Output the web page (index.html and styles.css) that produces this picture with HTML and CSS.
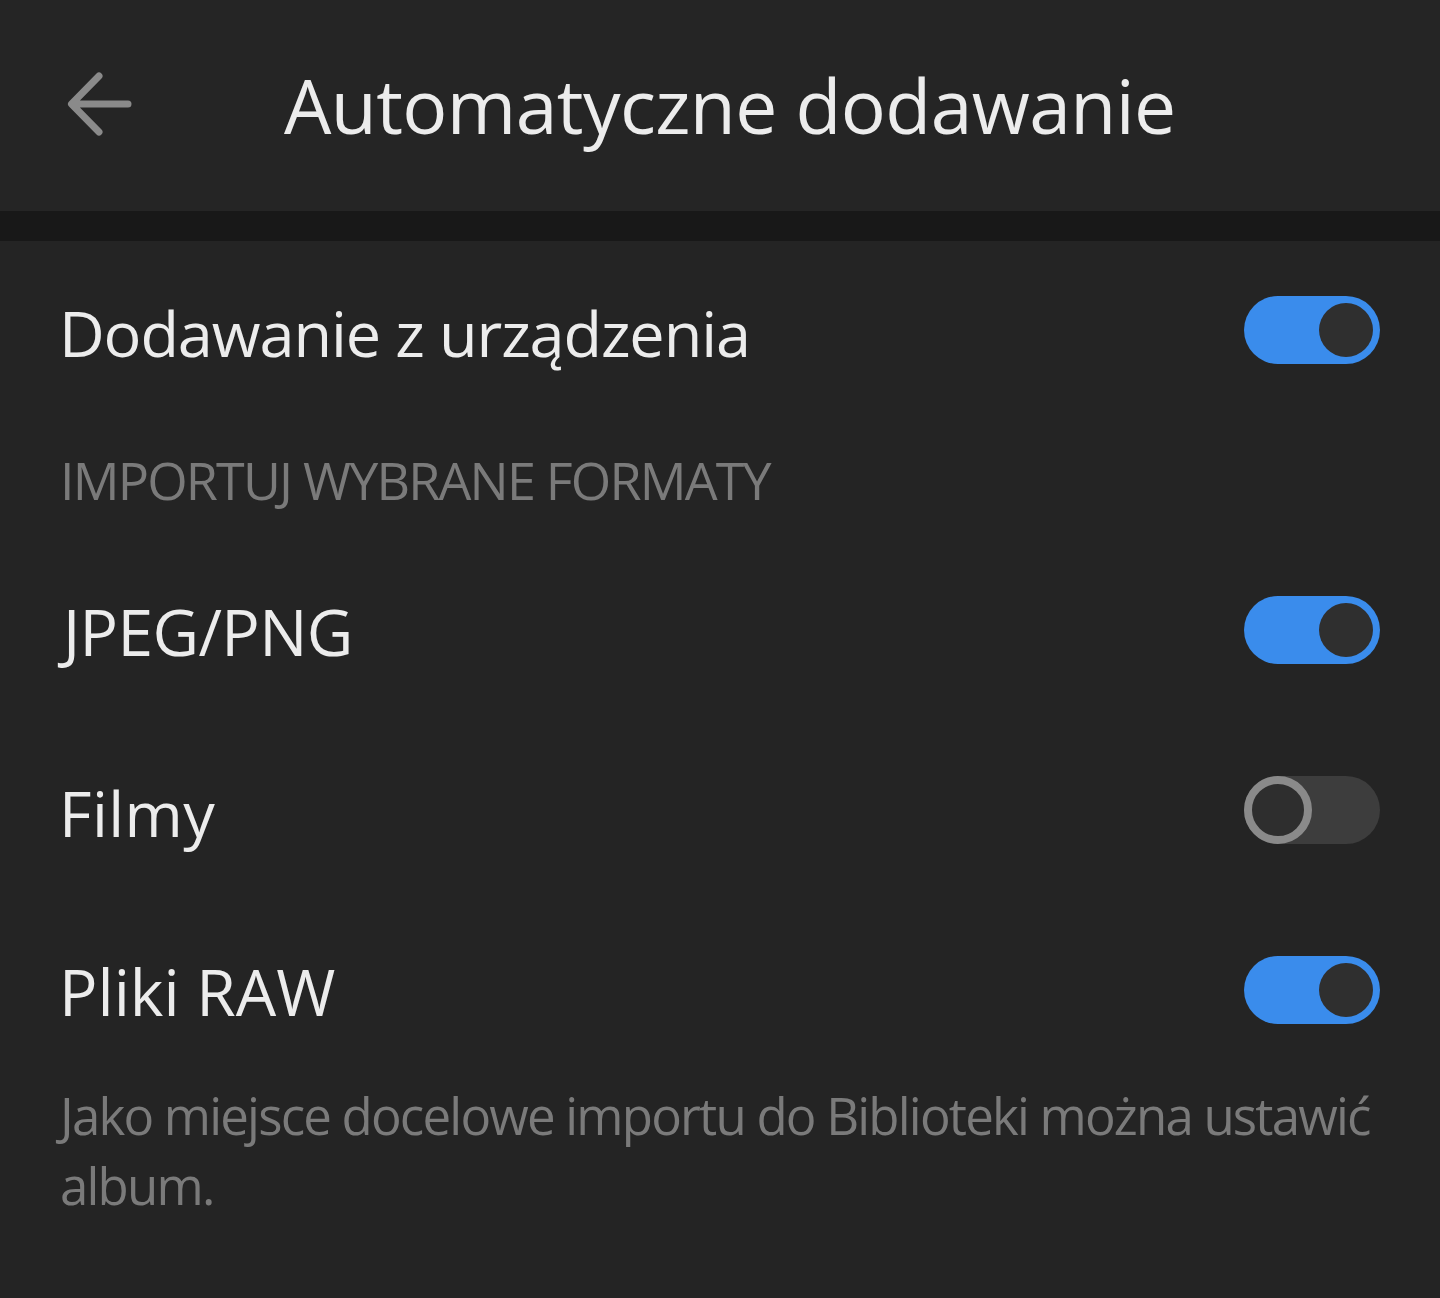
FILE: index.html
```html
<!DOCTYPE html>
<html lang="pl">
<head>
<meta charset="utf-8">
<title>Automatyczne dodawanie</title>
<link rel="stylesheet" href="styles.css">
</head>
<body>
<header class="appbar">
  <button class="back" aria-label="Wstecz">
    <svg width="72" height="72" viewBox="0 0 72 72">
      <path d="M64 36H8M35 8L7.5 36L35 64" fill="none" stroke="#8a8a8a" stroke-width="7" stroke-linecap="round" stroke-linejoin="round"/>
    </svg>
  </button>
  <h1 class="title">Automatyczne dodawanie</h1>
</header>
<div class="band"></div>
<main class="content">
  <div class="row row-first">
    <span class="label">Dodawanie z urządzenia</span>
    <span class="toggle on"><span class="knob"></span></span>
  </div>
  <div class="section">IMPORTUJ WYBRANE FORMATY</div>
  <div class="row">
    <span class="label label-caps label-j">JPEG/PNG</span>
    <span class="toggle on"><span class="knob"></span></span>
  </div>
  <div class="row">
    <span class="label label-short">Filmy</span>
    <span class="toggle off"><span class="knob"></span></span>
  </div>
  <div class="row">
    <span class="label label-caps">Pliki RAW</span>
    <span class="toggle on"><span class="knob"></span></span>
  </div>
  <p class="note">Jako miejsce docelowe importu do Biblioteki można ustawić album.</p>
</main>
</body>
</html>
```
FILE: styles.css
```css
html, body {
  margin: 0;
  padding: 0;
  background: #242424;
}
body {
  font-family: "Open Sans", "Noto Sans", sans-serif;
  color: #ececec;
  width: 1440px;
  height: 1298px;
  overflow: hidden;
}
.appbar {
  height: 211px;
  display: flex;
  align-items: center;
  background: #252525;
}
.back {
  background: none;
  border: 0;
  padding: 0;
  margin: 0 0 0 64px;
  width: 72px;
  height: 72px;
  display: flex;
  align-items: center;
  justify-content: center;
  margin-top: -4px;
}
.title {
  margin: 0 0 0 148px;
  font-weight: 400;
  font-size: 75px;
  letter-spacing: -0.6px;
  color: #ececec;
  line-height: 1;
}
.band {
  height: 30px;
  background: #181818;
}
.content {
  padding: 0 60px 0 59px;
}
.row {
  height: 180px;
  display: flex;
  align-items: center;
  justify-content: space-between;
}
.row-first {
  height: 178px;
}
.label {
  font-size: 63px;
  letter-spacing: -1.1px;
  line-height: 1;
  margin-top: 4px;
}
.label-caps {
  font-size: 64px;
  letter-spacing: 0;
}
.label-j {
  margin-left: 4px;
  letter-spacing: -0.6px;
}
.label-short {
  letter-spacing: 0.4px;
}
.section {
  height: 121px;
  display: flex;
  align-items: center;
  font-size: 52px;
  letter-spacing: -1.8px;
  color: #7a7a7a;
  padding-left: 1px;
}
.toggle {
  position: relative;
  width: 136px;
  height: 68px;
  border-radius: 34px;
  flex: none;
  box-sizing: border-box;
}
.toggle.on {
  background: #3a8cec;
}
.toggle.on .knob {
  position: absolute;
  right: 7px;
  top: 7px;
  width: 54px;
  height: 54px;
  border-radius: 50%;
  background: #2f2f2f;
}
.toggle.off {
  background: #3d3d3d;
}
.toggle.off .knob {
  position: absolute;
  left: 0;
  top: 0;
  width: 68px;
  height: 68px;
  box-sizing: border-box;
  border-radius: 50%;
  border: 8px solid #8a8a8a;
  background: #2e2e2e;
}
.note {
  margin: 0 -40px 0 1px;
  font-size: 51px;
  line-height: 70px;
  letter-spacing: -1.8px;
  color: #7a7a7a;
  padding-top: 0;
}
```
